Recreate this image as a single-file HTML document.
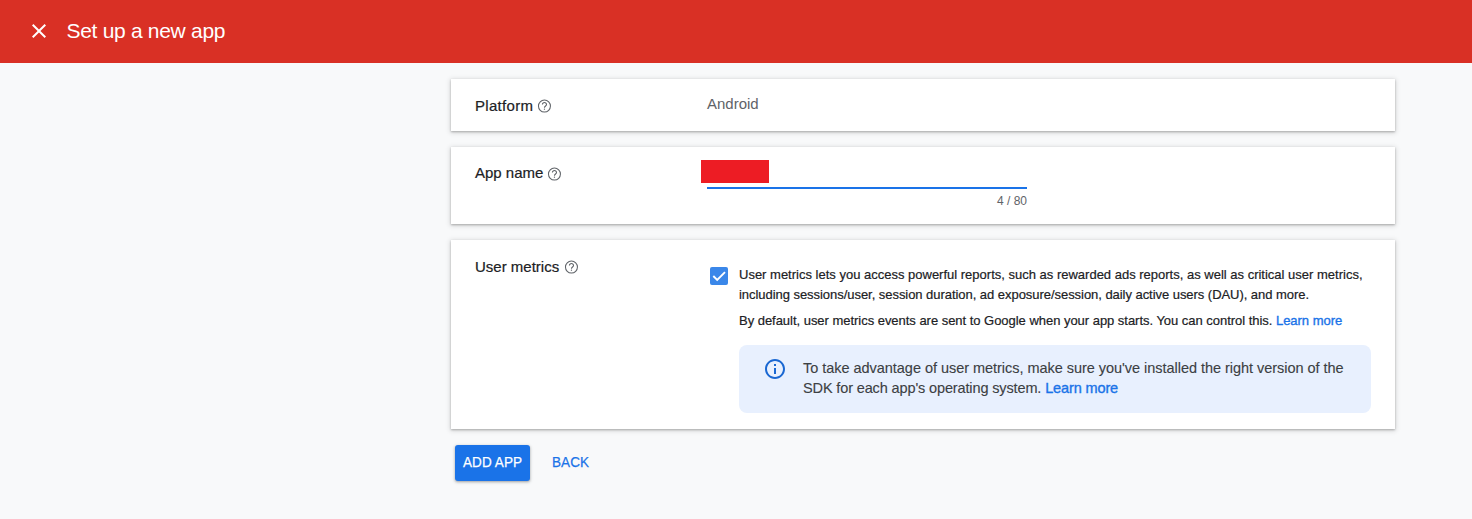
<!DOCTYPE html>
<html><head><meta charset="utf-8">
<style>
*{box-sizing:border-box;margin:0;padding:0}
html,body{width:1472px;height:519px;overflow:hidden;background:#f8f9fa;font-family:"Liberation Sans",sans-serif;color:#202124}
.abs{position:absolute;white-space:nowrap}
#hdr{position:absolute;left:0;top:0;width:1472px;height:63px;background:#d93025}
#close{position:absolute;left:27px;top:19px;width:24px;height:24px}
#title{left:66.5px;top:18.6px;font-size:21px;line-height:24px;letter-spacing:-0.3px;color:#fff}
.card{position:absolute;left:451px;width:944px;background:#fff;box-shadow:0 1px 2px 0 rgba(0,0,0,.25),0 1px 5px 1px rgba(0,0,0,.13)}
.lbl{font-size:15px;line-height:20px;color:#202124;-webkit-text-stroke:0.2px #202124}
.help{position:absolute;width:16px;height:16px}
.p13{font-size:13px;line-height:20px;color:#202124;-webkit-text-stroke:0.2px #202124}
.link{color:#1a73e8;-webkit-text-stroke:0.35px #1a73e8}
</style></head><body>
<div id="hdr">
  <svg id="close" viewBox="0 0 24 24"><path fill="#fff" d="M19 6.41L17.59 5 12 10.59 6.41 5 5 6.41 10.59 12 5 17.59 6.41 19 12 13.41 17.59 19 19 17.59 13.41 12z"/></svg>
  <div id="title" class="abs">Set up a new app</div>
</div>

<div class="card" style="top:79px;height:52px"></div>
<div class="card" style="top:147px;height:77px"></div>
<div class="card" style="top:240px;height:189px"></div>

<!-- card 1 -->
<div class="abs lbl" style="left:475px;top:96px;letter-spacing:0.3px">Platform</div>
<svg class="help" style="left:536px;top:98px" viewBox="0 0 16 16"><circle cx="8.45" cy="8.05" r="6.0" fill="none" stroke="#5f6368" stroke-width="1.05"/><path d="M6.4 6.5A2.05 2.05 0 1 1 10.5 6.5C10.5 7.9 8.45 8.1 8.45 9.7" fill="none" stroke="#5f6368" stroke-width="1.05"/><circle cx="8.45" cy="11.2" r="0.65" fill="#5f6368"/></svg>
<div class="abs lbl" style="left:707px;top:94px;color:#5f6368;-webkit-text-stroke:0">Android</div>

<!-- card 2 -->
<div class="abs lbl" style="left:475px;top:163px">App name</div>
<svg class="help" style="left:546px;top:166px" viewBox="0 0 16 16"><circle cx="8.45" cy="8.05" r="6.0" fill="none" stroke="#5f6368" stroke-width="1.05"/><path d="M6.4 6.5A2.05 2.05 0 1 1 10.5 6.5C10.5 7.9 8.45 8.1 8.45 9.7" fill="none" stroke="#5f6368" stroke-width="1.05"/><circle cx="8.45" cy="11.2" r="0.65" fill="#5f6368"/></svg>
<div style="position:absolute;left:701px;top:160px;width:68px;height:23px;background:#ed1c24"></div>
<div style="position:absolute;left:707px;top:187px;width:320px;height:2px;background:#1a73e8"></div>
<div class="abs" style="left:927px;width:100px;top:193px;text-align:right;font-size:12px;line-height:16px;color:#5f6368">4 / 80</div>

<!-- card 3 -->
<div class="abs lbl" style="left:475px;top:257px">User metrics</div>
<svg class="help" style="left:563px;top:259px" viewBox="0 0 16 16"><circle cx="8.45" cy="8.05" r="6.0" fill="none" stroke="#5f6368" stroke-width="1.05"/><path d="M6.4 6.5A2.05 2.05 0 1 1 10.5 6.5C10.5 7.9 8.45 8.1 8.45 9.7" fill="none" stroke="#5f6368" stroke-width="1.05"/><circle cx="8.45" cy="11.2" r="0.65" fill="#5f6368"/></svg>

<div style="position:absolute;left:710px;top:267px;width:18px;height:18px;background:#3a87e9;border-radius:2px">
  <svg style="position:absolute;left:0;top:0" width="18" height="18" viewBox="0 0 18 18"><path d="M3.3 9L7.2 12.9 15 5.1" fill="none" stroke="#fff" stroke-width="1.9"/></svg>
</div>
<div class="abs p13" style="left:739px;top:265px">User metrics lets you access powerful reports, such as rewarded ads reports, as well as critical user metrics,</div>
<div class="abs p13" style="left:739px;top:285px;letter-spacing:-0.045px">including sessions/user, session duration, ad exposure/session, daily active users (DAU), and more.</div>
<div class="abs p13" style="left:739px;top:311px;letter-spacing:-0.03px">By default, user metrics events are sent to Google when your app starts. You can control this. <span class="link">Learn more</span></div>

<div style="position:absolute;left:739px;top:345px;width:632px;height:68px;background:#e8f0fe;border-radius:8px"></div>
<svg style="position:absolute;left:763px;top:357px" width="24" height="24" viewBox="0 0 24 24"><path fill="#1967d2" d="M11 7h2v2h-2zm0 4h2v6h-2zm1-9C6.48 2 2 6.48 2 12s4.48 10 10 10 10-4.48 10-10S17.52 2 12 2zm0 18c-4.41 0-8-3.59-8-8s3.59-8 8-8 8 3.59 8 8-3.59 8-8 8z"/></svg>
<div class="abs" style="left:803px;top:358px;font-size:14.5px;line-height:20px;letter-spacing:-0.035px;color:#3c4043;-webkit-text-stroke:0.12px #3c4043">To take advantage of user metrics, make sure you've installed the right version of the</div>
<div class="abs" style="left:803px;top:378px;font-size:14.5px;line-height:20px;letter-spacing:-0.13px;color:#3c4043;-webkit-text-stroke:0.12px #3c4043">SDK for each app's operating system. <span class="link">Learn more</span></div>

<!-- buttons -->
<div style="position:absolute;left:455px;top:445px;width:75px;height:36px;background:#1a73e8;border-radius:3px;box-shadow:0 1px 2px 0 rgba(60,64,67,.3),0 1px 3px 1px rgba(60,64,67,.15)"></div>
<div class="abs" style="left:463px;top:452px;font-size:15px;line-height:20px;letter-spacing:0.1px;transform:scaleX(0.9);transform-origin:0 0;color:#fff;-webkit-text-stroke:0.25px #fff">ADD APP</div>
<div class="abs" style="left:552px;top:452px;font-size:15px;line-height:20px;letter-spacing:0.1px;transform:scaleX(0.9);transform-origin:0 0;color:#1a73e8;-webkit-text-stroke:0.25px #1a73e8">BACK</div>
</body></html>
